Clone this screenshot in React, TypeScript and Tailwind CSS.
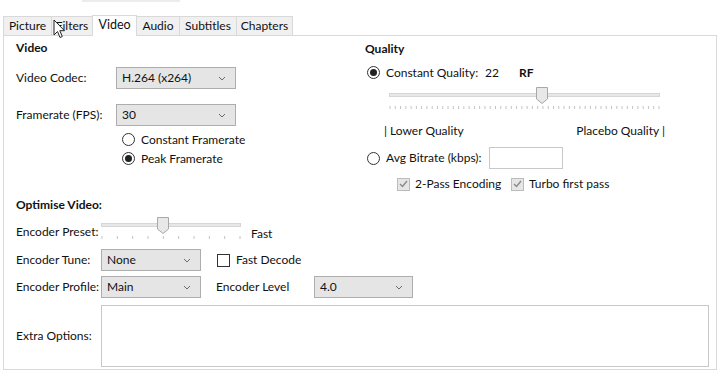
import React from "react";

const TABS = [
  { label: "Picture", w: "w-[49px]" },
  { label: "Filters", w: "w-[42px]" },
  { label: "Video", w: "w-[45px]", active: true },
  { label: "Audio", w: "w-[44px]" },
  { label: "Subtitles", w: "w-[58px]" },
  { label: "Chapters", w: "w-[57px]" },
];

function Chevron() {
  return (
    <svg width="8" height="5" viewBox="0 0 8 5" className="shrink-0">
      <path d="M1 1 L4 4 L7 1" fill="none" stroke="#6b6b6b" strokeWidth="1" />
    </svg>
  );
}

function Select({ value, className }: { value: string; className: string }) {
  return (
    <div
      className={`flex h-[22px] shrink-0 items-center justify-between border border-[#adadad] bg-[#e5e5e5] pr-[9px] pl-[5px] ${className}`}
    >
      <span>{value}</span>
      <Chevron />
    </div>
  );
}

function Radio({ checked }: { checked?: boolean }) {
  return (
    <span className="flex h-[13px] w-[13px] shrink-0 items-center justify-center rounded-full border border-[#333] bg-white">
      {checked && <span className="h-[7px] w-[7px] rounded-full bg-[#222]" />}
    </span>
  );
}

function Check({ checked, disabled }: { checked?: boolean; disabled?: boolean }) {
  return (
    <span
      className={`flex h-[13px] w-[13px] shrink-0 items-center justify-center border ${
        disabled ? "border-[#bcbcbc] bg-[#e6e6e6]" : "border-[#333] bg-white"
      }`}
    >
      {checked && (
        <svg width="9" height="8" viewBox="0 0 9 8">
          <path d="M1 4 L3.5 6.5 L8 1" fill="none" stroke="#8a8a8a" strokeWidth="1.4" />
        </svg>
      )}
    </span>
  );
}

function Slider({ width, thumb, ticks }: { width: number; thumb: number; ticks: number }) {
  const marks = Array.from({ length: ticks }, (_, i) => 1 + (i * (width - 2)) / (ticks - 1));
  return (
    <svg width={width} height="24" viewBox={`0 0 ${width} 24`} className="shrink-0">
      <rect x="0.5" y="6.5" width={width - 1} height="3" fill="#e7e7e7" stroke="#d6d6d6" />
      {marks.map((x, i) => (
        <line key={i} x1={x} x2={x} y1="19" y2="22" stroke="#c4c4c4" strokeWidth="1" />
      ))}
      <path
        d={`M${thumb - 5.5} 0.5 H${thumb + 5.5} V12 L${thumb} 16.5 L${thumb - 5.5} 12 Z`}
        fill="#e8e8e8"
        stroke="#a8a8a8"
      />
    </svg>
  );
}

function Cursor() {
  return (
    <svg width="14" height="21" viewBox="0 0 14 21" className="absolute top-[19px] left-[53px] z-20">
      <path
        d="M1 1 L1 16 L4.5 12.5 L7 18.5 L9.3 17.5 L6.8 11.7 L11.5 11.7 Z"
        fill="#fff"
        stroke="#222"
        strokeWidth="1"
        strokeLinejoin="round"
      />
    </svg>
  );
}

export default function App() {
  return (
    <div
      className="relative h-[372px] w-[719px] overflow-hidden bg-white text-[12px] whitespace-nowrap text-[#111]"
      style={{ fontFamily: 'Lato, "Open Sans", sans-serif' }}
    >
      <div className="absolute top-0 left-[82px] h-[2px] w-[98px] bg-[#ececec]" />
      <Cursor />

      <div className="ml-[4px] flex items-end pt-[15px]">
        {TABS.map((t) => (
          <div
            key={t.label}
            className={`-ml-px flex items-center justify-center border border-b-0 border-[#d9d9d9] ${t.w} ${
              t.active
                ? "relative z-10 -mb-px h-[21px] bg-white pb-[2px] text-[12.5px]"
                : "h-[19px] bg-[#f0f0f0]"
            }`}
          >
            {t.label}
          </div>
        ))}
      </div>

      <div className="ml-[3px] h-[335px] w-[714px] border border-[#d9d9d9] pl-[12px]">
        <div className="flex">
          {/* Left: Video */}
          <div className="w-[349px]">
            <div className="mt-[4px] h-[16px] leading-[16px] font-bold">Video</div>
            <div className="mt-[11px] flex h-[22px] items-center">
              <span className="w-[100px]">Video Codec:</span>
              <Select value="H.264 (x264)" className="w-[120px]" />
            </div>
            <div className="mt-[15px] flex h-[22px] items-center">
              <span className="w-[100px]">Framerate (FPS):</span>
              <Select value="30" className="w-[120px]" />
            </div>
            <div className="mt-[4px] ml-[106px] flex h-[19px] items-center gap-[6px]">
              <Radio />
              <span>Constant Framerate</span>
            </div>
            <div className="ml-[106px] flex h-[19px] items-center gap-[6px]">
              <Radio checked />
              <span>Peak Framerate</span>
            </div>
          </div>

          {/* Right: Quality */}
          <div className="flex-1">
            <div className="mt-[5px] h-[16px] leading-[16px] font-bold">Quality</div>
            <div className="mt-[7px] ml-[2px] flex h-[17px] items-center">
              <Radio checked />
              <span className="ml-[6px] w-[99px]">Constant Quality:</span>
              <span className="w-[34px]">22</span>
              <span className="font-bold">RF</span>
            </div>
            <div className="mt-[6px] ml-[24px]">
              <Slider width={271} thumb={153} ticks={52} />
            </div>
            <div className="mt-[12px] flex h-[16px] w-[300px] items-center justify-between pl-[19px]">
              <span>| Lower Quality</span>
              <span>Placebo Quality |</span>
            </div>
            <div className="mt-[8px] ml-[2px] flex h-[22px] items-center">
              <Radio />
              <span className="ml-[6px] w-[103px]">Avg Bitrate (kbps):</span>
              <span className="h-[22px] w-[74px] border border-[#c8c8c8] bg-white" />
            </div>
            <div className="mt-[7px] ml-[32px] flex h-[16px] items-center">
              <Check checked disabled />
              <span className="ml-[5px] w-[96px]">2-Pass Encoding</span>
              <Check checked disabled />
              <span className="ml-[5px]">Turbo first pass</span>
            </div>
          </div>
        </div>

        {/* Optimise */}
        <div className="mt-[5px] h-[16px] leading-[16px] font-bold">Optimise Video:</div>
        <div className="mt-[4px] flex h-[24px] items-start">
          <span className="mt-[6px] w-[85px] shrink-0">Encoder Preset:</span>
          <div className="w-[140px] shrink-0">
            <Slider width={140} thumb={62} ticks={10} />
          </div>
          <span className="mt-[8px] ml-[10px]">Fast</span>
        </div>
        <div className="mt-[8px] flex h-[22px] items-center">
          <span className="w-[85px]">Encoder Tune:</span>
          <Select value="None" className="w-[100px]" />
          <span className="ml-[16px]">
            <Check />
          </span>
          <span className="ml-[6px]">Fast Decode</span>
        </div>
        <div className="mt-[5px] flex h-[22px] items-center">
          <span className="w-[85px]">Encoder Profile:</span>
          <Select value="Main" className="w-[100px]" />
          <span className="ml-[15px] w-[98px]">Encoder Level</span>
          <Select value="4.0" className="w-[99px]" />
        </div>
        <div className="mt-[7px] flex h-[62px] items-center">
          <span className="w-[85px]">Extra Options:</span>
          <div className="h-[62px] w-[608px] border border-[#c8c8c8] bg-white" />
        </div>
      </div>
    </div>
  );
}
